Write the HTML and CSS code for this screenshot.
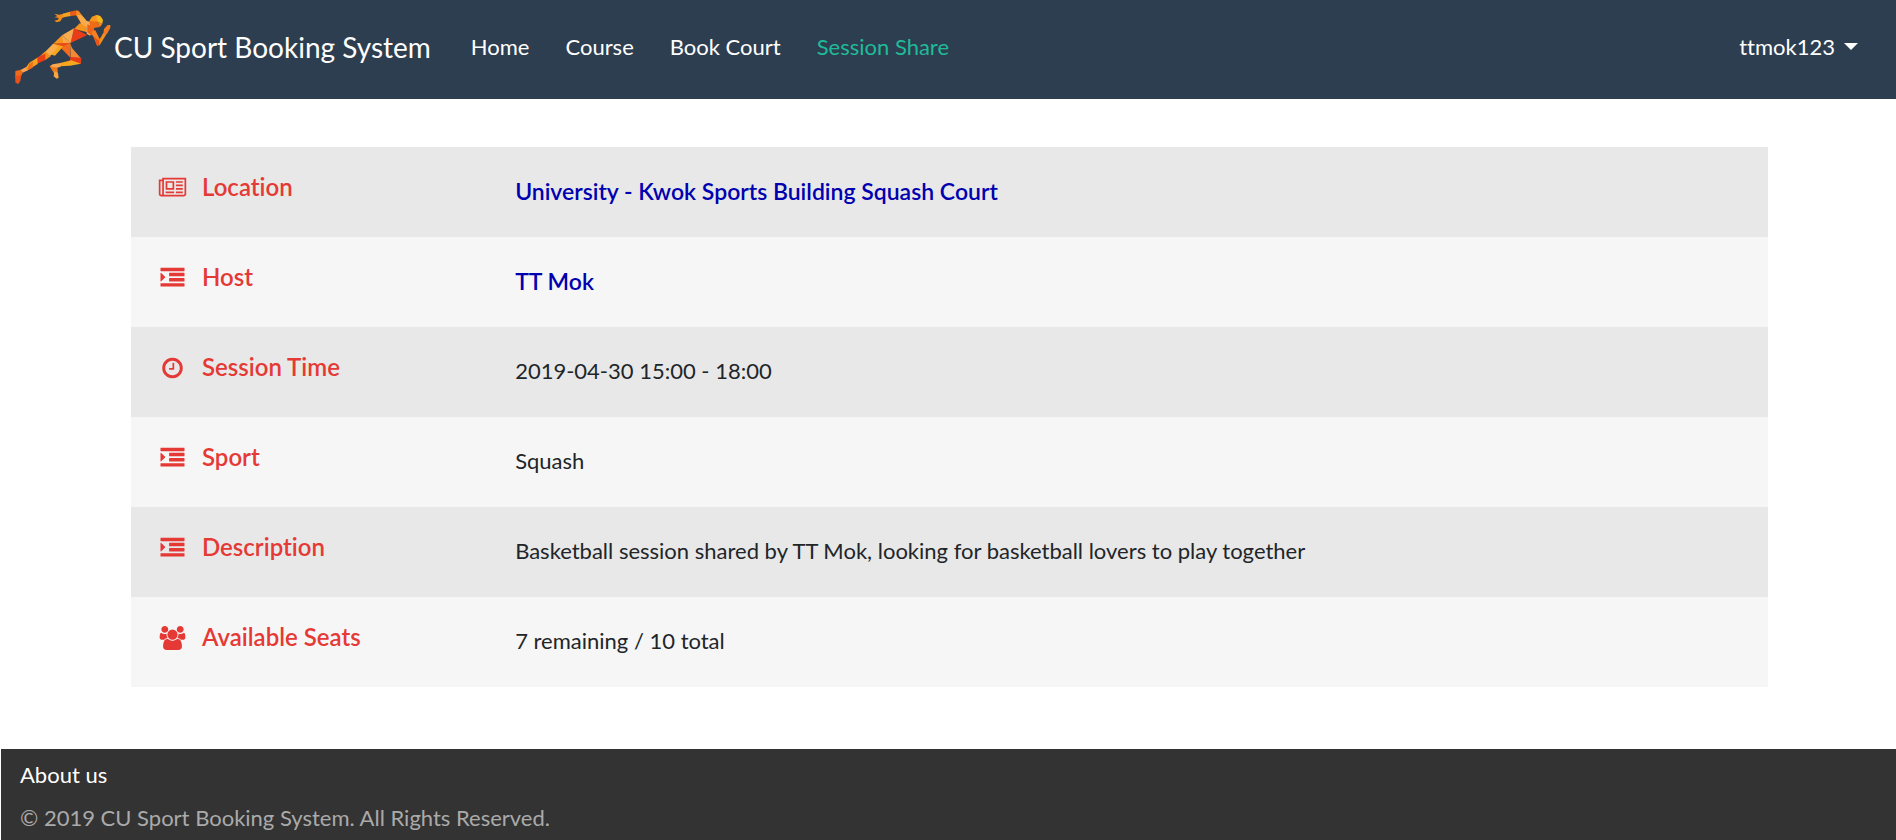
FILE: index.html
```html
<!DOCTYPE html>
<html lang="en">
<head>
<meta charset="utf-8">
<meta name="viewport" content="width=device-width, initial-scale=1">
<title>CU Sport Booking System</title>
<link rel="stylesheet" href="styles.css">
</head>
<body>
<svg class="sprite" aria-hidden="true">
  <symbol id="newspaper" viewBox="0 0 2048 1792"><path d="M1024 512h-384v384h384v-384zm128 640v128h-640v-128h640zm0-768v640h-640v-640h640zm640 768v128h-512v-128h512zm0-256v128h-512v-128h512zm0-256v128h-512v-128h512zm0-256v128h-512v-128h512zm-1536 960v-960h-128v960q0 26 19 45t45 19 45-19 19-45zm1664 0v-1088h-1536v1088q0 33-11 64h1483q26 0 45-19t19-45zm128-1216v1216q0 80-56 136t-136 56h-1664q-80 0-136-56t-56-136v-1088h256v-128h1792z"/></symbol>
  <symbol id="indent" viewBox="0 0 1792 1792"><path d="M352 832q0 14-9 23l-288 288q-9 9-23 9-13 0-22.500-9.500t-9.500-22.500v-576q0-13 9.500-22.500t22.500-9.500q14 0 23 9l288 288q9 9 9 23zm1440 480v192q0 13-9.500 22.500t-22.500 9.500h-1728q-13 0-22.500-9.500t-9.500-22.500v-192q0-13 9.500-22.500t22.500-9.500h1728q13 0 22.500 9.500t9.500 22.500zm0-384v192q0 13-9.500 22.500t-22.500 9.500h-1088q-13 0-22.500-9.500t-9.500-22.500v-192q0-13 9.500-22.500t22.500-9.500h1088q13 0 22.500 9.500t9.500 22.500zm0-384v192q0 13-9.500 22.500t-22.500 9.500h-1088q-13 0-22.500-9.500t-9.500-22.500v-192q0-13 9.500-22.500t22.500-9.500h1088q13 0 22.500 9.500t9.500 22.500zm0-384v192q0 13-9.500 22.500t-22.500 9.500h-1728q-13 0-22.500-9.500t-9.500-22.500v-192q0-13 9.500-22.500t22.500-9.500h1728q13 0 22.500 9.500t9.500 22.500z"/></symbol>
  <symbol id="clock" viewBox="0 0 1792 1792"><path d="M1024 544v448q0 14-9 23t-23 9h-320q-14 0-23-9t-9-23v-64q0-14 9-23t23-9h224v-352q0-14 9-23t23-9h64q14 0 23 9t9 23zm416 352q0-148-73-273t-198-198-273-73-273 73-198 198-73 273 73 273 198 198 273 73 273-73 198-198 73-273zm224 0q0 209-103 385.500t-279.500 279.500-385.500 103-385.500-103-279.500-279.500-103-385.500 103-385.500 279.500-279.500 385.500-103 385.500 103 279.500 279.500 103 385.500z"/></symbol>
  <symbol id="users" viewBox="0 0 1920 1792"><path d="M593 896q-162 5-265 128h-134q-82 0-138-40.500t-56-118.500q0-353 124-353 6 0 43.500 21t97.500 42.500 119 21.500q67 0 133-23-5 37-5 66 0 139 81 256zm1071 637q0 120-73 189.500t-194 69.500h-874q-121 0-194-69.500t-73-189.500q0-53 3.500-103.500t14-109 26.500-108.500 43-97.500 62-81 85.500-53.500 111.500-20q10 0 43 21.500t73 48 107 48 135 21.500 135-21.500 107-48 73-48 43-21.500q61 0 111.500 20t85.500 53.500 62 81 43 97.500 26.500 108.500 14 109 3.500 103.500zm-1024-1277q0 106-75 181t-181 75-181-75-75-181 75-181 181-75 181 75 75 181zm704 384q0 159-112.500 271.500t-271.500 112.500-271.500-112.500-112.500-271.500 112.500-271.500 271.500-112.500 271.500 112.500 112.500 271.500zm576 225q0 78-56 118.500t-138 40.500h-134q-103-123-265-128 81-117 81-256 0-29-5-66 66 23 133 23 59 0 119-21.500t97.500-42.500 43.500-21q124 0 124 353zm-128-609q0 106-75 181t-181 75-181-75-75-181 75-181 181-75 181 75 75 181z"/></symbol>
</svg>

<header>
  <nav class="navbar" aria-label="Main">
    <a class="brand" href="#">
      <svg class="logo" viewBox="42 18 297 240" aria-hidden="true">
        <!-- rear arm -->
        <path fill="#f28a1c" d="M163 38L177 41 191 38 196 47 187 51 181 61 170 64 163 59 174 56 176 51 163 49 172 46Z"/>
        <path fill="#f6a321" d="M188 38L210 32 213 45 190 49Z"/>
        <path fill="#ec5a18" d="M209 32L230 28 237 42 212 45Z"/>
        <path fill="#f58b1f" d="M230 28L236 30 262 62 246 72 228 42Z"/>
        <path fill="#f9ac4b" d="M232 42L244 43 262 62 246 72Z"/>
        <!-- torso -->
        <path fill="#f9a94a" d="M246 62L262 60 260 82 240 76Z"/>
        <path fill="#f7941d" d="M240 66L222 84 262 94 258 78Z"/>
        <path fill="#f9ad55" d="M258 60L272 62 282 84 270 104 260 98Z"/>
        <path fill="#ea3c17" d="M222 82L262 102 212 126Z"/>
        <path fill="#f9ab50" d="M222 82L212 126 186 103Z"/>
        <path fill="#f7941d" d="M186 103L160 128 198 128Z"/>
        <path fill="#faa74a" d="M186 103L212 126 190 130Z"/>
        <!-- front arm -->
        <path fill="#ef6316" d="M262 70L277 76 288 96 276 104 262 94Z"/>
        <path fill="#f58220" d="M274 92L286 88 300 116 292 136Z"/>
        <path fill="#ec5316" d="M280 106L292 136 299 132 302 112 296 118Z"/>
        <path fill="#f39019" d="M298 116L310 96 320 98 298 134Z"/>
        <path fill="#f47c20" d="M310 98L312 84 323 72 331 72 331 80 321 99Z"/>
        <!-- head -->
        <path fill="#f7981d" d="M268 60L276 47 289 42 301 46 292 62 275 66Z"/>
        <path fill="#f5b51c" d="M289 42L301 45 309 56 307 68 292 62Z"/>
        <path fill="#ef6c17" d="M268 60L292 62 300 78 285 80 272 84Z"/>
        <path fill="#f58a1e" d="M292 62L307 68 300 78Z"/>
        <!-- front leg -->
        <path fill="#e94816" d="M160 128L212 125 194 141 174 137Z"/>
        <path fill="#f26b1d" d="M210 125L182 140 212 171Z"/>
        <path fill="#f58a35" d="M210 125L216 141 242 171 213 170Z"/>
        <path fill="#e83b17" d="M244 170L243 188 208 182 212 168Z"/>
        <path fill="#f7a71e" d="M214 178L243 188 210 194 180 196 180 186Z"/>
        <path fill="#faa64d" d="M181 186L158 190 149 196 160 204 182 197Z"/>
        <path fill="#f17c1d" d="M149 196L172 200 174 219 164 220Z"/>
        <path fill="#f9a63f" d="M163 211L174 216 176 230 170 233 161 226Z"/>
        <!-- rear leg -->
        <path fill="#f7a41d" d="M160 128L190 136 165 164 134 155Z"/>
        <path fill="#f9ae4e" d="M160 128L174 137 150 166 130 158Z"/>
        <path fill="#f58e1c" d="M136 151L152 166 136 177 116 169Z"/>
        <path fill="#e83d17" d="M136 158L136 177 108 190 110 170Z"/>
        <path fill="#f7a31d" d="M112 170L113 189 82 208 76 202 88 185Z"/>
        <path fill="#f26f1c" d="M88 188L99 182 98 200 80 209Z"/>
        <path fill="#f9a451" d="M77 199L84 208 68 215 60 208Z"/>
        <path fill="#ef6b19" d="M46 210L63 206 68 216 60 232 46 230Z"/>
        <path fill="#e95118" d="M46 226L64 222 61 240 54 250 46 244Z"/>
      </svg>
      <span>CU Sport Booking System</span>
    </a>
    <ul class="links">
      <li><a href="#">Home</a></li>
      <li><a href="#">Course</a></li>
      <li><a href="#">Book Court</a></li>
      <li><a class="active" href="#" aria-current="page">Session Share</a></li>
    </ul>
    <button class="account" type="button" aria-haspopup="true">ttmok123<span class="caret"></span></button>
  </nav>
</header>

<main>
  <table class="details">
    <tbody>
      <tr>
        <th scope="row"><div class="label"><svg class="icon"><use href="#newspaper"/></svg>Location</div></th>
        <td><a href="#">University - Kwok Sports Building Squash Court</a></td>
      </tr>
      <tr>
        <th scope="row"><div class="label"><svg class="icon"><use href="#indent"/></svg>Host</div></th>
        <td><a href="#">TT Mok</a></td>
      </tr>
      <tr>
        <th scope="row"><div class="label"><svg class="icon"><use href="#clock"/></svg>Session Time</div></th>
        <td>2019-04-30 15:00 - 18:00</td>
      </tr>
      <tr>
        <th scope="row"><div class="label"><svg class="icon"><use href="#indent"/></svg>Sport</div></th>
        <td>Squash</td>
      </tr>
      <tr>
        <th scope="row"><div class="label"><svg class="icon"><use href="#indent"/></svg>Description</div></th>
        <td>Basketball session shared by TT Mok, looking for basketball lovers to play together</td>
      </tr>
      <tr>
        <th scope="row"><div class="label"><svg class="icon"><use href="#users"/></svg>Available Seats</div></th>
        <td>7 remaining / 10 total</td>
      </tr>
    </tbody>
  </table>
</main>

<footer class="footer">
  <a href="#">About us</a>
  <p>© 2019 CU Sport Booking System. All Rights Reserved.</p>
</footer>
</body>
</html>
```
FILE: styles.css
```css
* {
  box-sizing: border-box;
}

html,
body {
  min-height: 100%;
}

html {
  display: flex;
  flex-direction: column;
}

body {
  flex: 1;
  display: flex;
  flex-direction: column;
  margin: 0;
  background: #fff;
  color: #212529;
  font: 22px/36px Lato, "Liberation Sans", sans-serif;
  font-variant-ligatures: none;
}

a {
  color: inherit;
  text-decoration: none;
}

.sprite {
  position: absolute;
  width: 0;
  height: 0;
}

.navbar {
  display: flex;
  align-items: center;
  padding: 0 38px 6px 14px;
  min-height: 99px;
  background: #2d3e50;
  color: #fff;
}

.brand {
  display: flex;
  align-items: center;
  gap: 1px;
  font-size: 28px;
}

.logo {
  width: 99px;
  height: 80px;
}

.links {
  display: flex;
  flex: 1;
  gap: 36px;
  margin: 0 0 0 40px;
  padding: 0;
  list-style: none;
}

.links .active {
  color: #1fbb98;
}

.account {
  display: flex;
  align-items: center;
  gap: 9px;
  padding: 0;
  border: 0;
  background: none;
  color: inherit;
  font: inherit;
}

.caret {
  border: 7px solid transparent;
  border-top-color: #fff;
  border-bottom: 0;
}

main {
  padding: 48px 128px 62px 131px;
}

.details {
  width: 100%;
  border-collapse: collapse;
  table-layout: fixed;
}

.details tr {
  height: 90px;
  background: #f6f6f6;
}

.details tr:nth-child(odd) {
  background: #e8e8e8;
}

.details th {
  width: 22%;
  padding: 22px 0 0 26px;
  color: #e53935;
  font-size: 24px;
  font-weight: 600;
  text-align: left;
  vertical-align: top;
}

.details td {
  padding: 26px 24px 0;
  vertical-align: top;
}

.details a {
  color: #0000b0;
  font-size: 23px;
  font-weight: 600;
}

.label {
  display: flex;
  align-items: center;
  gap: 14px;
}

.icon {
  width: 31px;
  height: 24px;
  margin-top: 2px;
  fill: currentColor;
}

.footer {
  flex: 1;
  margin-left: 1px;
  padding: 8px 19px 0;
  background: #333;
  color: #fff;
}

.footer p {
  margin: 7px 0 0;
  color: #aaa;
}
```
